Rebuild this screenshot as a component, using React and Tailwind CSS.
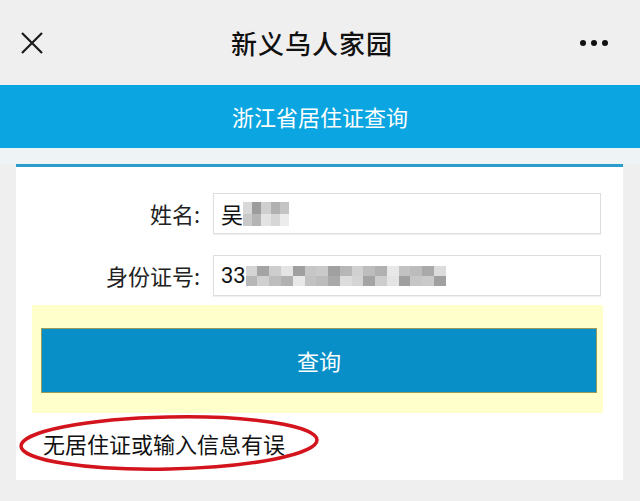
export default function App() {
  const cjk = { fontFamily: '"Noto Sans CJK SC", "Noto Sans", sans-serif' };
  const shades = [
    "bg-[#d4d4d4]", "bg-[#c6c6c6]", "bg-[#bdbdbd]", "bg-[#a9a9a9]", "bg-[#e4e4e4]",
    "bg-[#b7b7b7]", "bg-[#c2c2c2]", "bg-[#a4a4a4]", "bg-[#cacaca]", "bg-[#b1b1b1]",
    "bg-[#dcdcdc]", "bg-[#9f9f9f]", "bg-[#d0d0d0]", "bg-[#bcbcbc]", "bg-[#cdcdcd]",
    "bg-[#a0a0a0]", "bg-[#e8e8e8]",
  ];
  const nameCells = [
    "bg-[#d8d8d8]", "bg-[#9c9c9c]", "bg-[#cfcfcf]", "bg-[#b0b0b0]", "bg-[#c4c4c4]",
    "bg-[#c9c9c9]", "bg-[#b4b4b4]", "bg-[#e3e3e3]", "bg-[#d6d6d6]", "bg-[#ececec]",
  ];
  const idCells = [];
  for (let r = 0; r < 2; r++) {
    for (let c = 0; c < 17; c++) {
      idCells.push(shades[(c * 7 + r * 5) % shades.length]);
    }
  }

  return (
    <div className="w-[640px] h-[501px] bg-[#efefef] flex flex-col overflow-hidden" style={cjk}>
      {/* 顶部标题栏 */}
      <div className="h-[85px] flex items-center justify-between px-[20px] shrink-0">
        <svg width="24" height="24" viewBox="0 0 24 24" className="text-[#1a1a1a]">
          <path d="M2 2 L22 22 M22 2 L2 22" stroke="currentColor" strokeWidth="2.2" fill="none" />
        </svg>
        <div className="text-[26px] font-medium text-[#111] tracking-[1px]">新义乌人家园</div>
        <div className="flex gap-[5px] pr-[12px]">
          <span className="w-[6px] h-[6px] rounded-full bg-[#111]" />
          <span className="w-[6px] h-[6px] rounded-full bg-[#111]" />
          <span className="w-[6px] h-[6px] rounded-full bg-[#111]" />
        </div>
      </div>

      {/* 蓝色标题 */}
      <div className="h-[63px] bg-[#0ba6e1] flex items-center justify-center shrink-0">
        <span className="text-white text-[22px]">浙江省居住证查询</span>
      </div>

      <div className="h-[16px] bg-[#eef4f6] shrink-0" />

      {/* 查询卡片 */}
      <div className="ml-[16px] mr-[17px] h-[316px] bg-white border-t-[3px] border-[#2a9ccb] shrink-0 relative">
        <div className="pt-[26px] pr-[22px] flex flex-col gap-[21px]">
          <div className="flex items-center">
            <div className="w-[184px] text-right text-[22px] text-[#222]">姓名:</div>
            <div className="ml-[13px] flex-1 h-[41px] border border-[#dedede] shadow-[0_1px_1px_rgba(0,0,0,0.06)] flex items-center pl-[7px]">
              <span className="text-[22px] text-[#111]">吴</span>
              <div className="grid grid-cols-5 w-[46px] h-[24px]">
                {nameCells.map((c, i) => (
                  <div key={i} className={c} />
                ))}
              </div>
            </div>
          </div>
          <div className="flex items-center">
            <div className="w-[184px] text-right text-[22px] text-[#222]">身份证号:</div>
            <div className="ml-[13px] flex-1 h-[41px] border border-[#dedede] shadow-[0_1px_1px_rgba(0,0,0,0.06)] flex items-center pl-[7px]">
              <span className="text-[22px] text-[#111]" style={{ fontFamily: 'Roboto, "Noto Sans CJK SC", sans-serif' }}>33</span>
              <div className="grid grid-cols-[repeat(17,minmax(0,1fr))] h-[20px] w-[200px]">
                {idCells.map((c, i) => (
                  <div key={i} className={c} />
                ))}
              </div>
            </div>
          </div>
        </div>

        <div className="mt-[9px] ml-[16px] mr-[20px] h-[108px] bg-[#ffffcc] pt-[23px] pl-[9px] pr-[6px]">
          <div className="h-[65px] bg-[#088fc7] border border-[#9a9a5a] flex items-center justify-center">
            <span className="text-white text-[22px]">查询</span>
          </div>
        </div>

        <div className="relative mt-[14px] ml-[27px] h-[32px] flex items-center">
          <span className="text-[22px] text-[#111] leading-none">无居住证或输入信息有误</span>
          <svg className="absolute left-[-25px] top-[-14px]" width="304" height="60" viewBox="0 0 304 60">
            <ellipse cx="151" cy="30" rx="148" ry="26" fill="none" stroke="#d3141c" strokeWidth="3.5" transform="rotate(-1.2 151 30)" />
          </svg>
        </div>
      </div>
    </div>
  );
}
